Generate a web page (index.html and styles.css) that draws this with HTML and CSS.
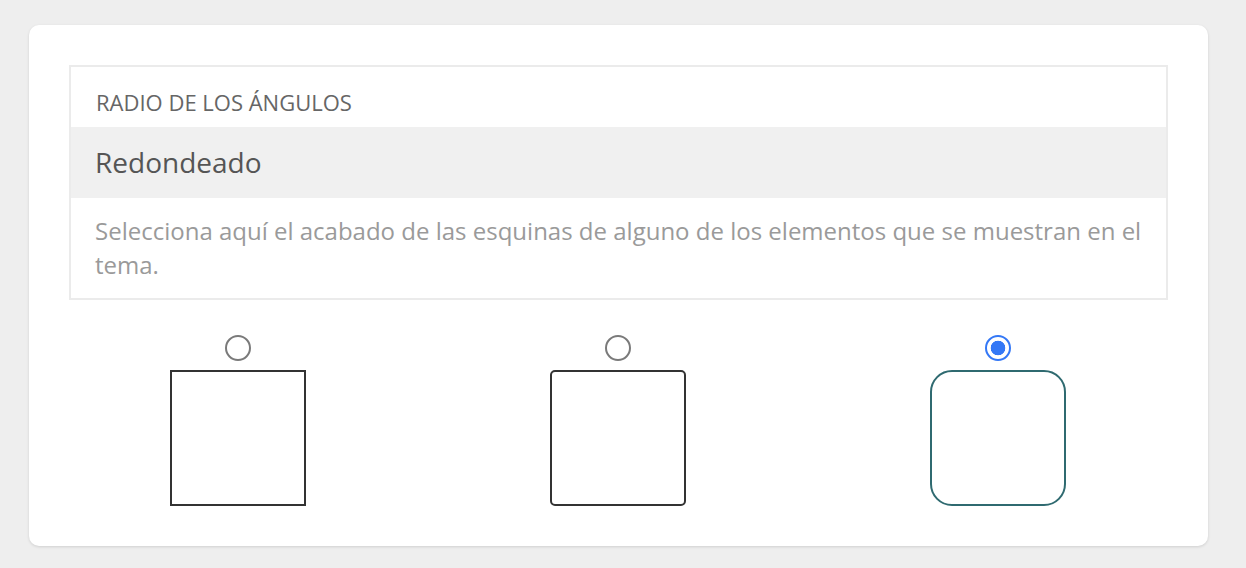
FILE: index.html
```html
<!DOCTYPE html>
<html lang="es">
<head>
<meta charset="utf-8">
<title>Radio de los ángulos</title>
<link rel="stylesheet" href="styles.css">
</head>
<body>
<div class="card">
  <div class="setting">
    <div class="setting-title">Radio de los ángulos</div>
    <div class="setting-value">Redondeado</div>
    <div class="setting-desc">Selecciona aquí el acabado de las esquinas de alguno de los elementos que se muestran en el tema.</div>
  </div>
  <div class="options">
    <label class="option">
      <input type="radio" name="radius" class="radio">
      <span class="swatch swatch-square"></span>
    </label>
    <label class="option">
      <input type="radio" name="radius" class="radio">
      <span class="swatch swatch-soft"></span>
    </label>
    <label class="option">
      <input type="radio" name="radius" class="radio" checked>
      <span class="swatch swatch-round"></span>
    </label>
  </div>
</div>
</body>
</html>
```

FILE: styles.css
```css
html, body {
  margin: 0;
  padding: 0;
}
body {
  background: #eeeeee;
  font-family: "Open Sans", "Liberation Sans", sans-serif;
  padding: 25px 38px 22px 29px;
}
.card {
  background: #ffffff;
  border-radius: 10px;
  box-shadow: 0 1px 3px rgba(0, 0, 0, 0.13);
  padding: 40px 40px 40px 40px;
}
.setting {
  border: 2px solid #ebebeb;
}
.setting-title {
  font-size: 22px;
  line-height: 30px;
  text-transform: uppercase;
  color: #666666;
  padding: 20px 24px 10px 25px;
}
.setting-value {
  background: #f0f0f0;
  font-size: 28px;
  line-height: 38px;
  color: #555555;
  padding: 16px 24px 17px 24px;
}
.setting-desc {
  font-size: 24px;
  line-height: 34px;
  color: #9a9a9a;
  padding: 16px 22px 16px 24px;
}
.options {
  display: flex;
  justify-content: center;
  gap: 244px;
  margin-top: 35px;
  padding-right: 2px;
}
.option {
  display: flex;
  flex-direction: column;
  align-items: center;
  gap: 9px;
  width: 136px;
  cursor: pointer;
}
.radio {
  -webkit-appearance: none;
  appearance: none;
  margin: 0;
  width: 26px;
  height: 26px;
  border: 2px solid #7a7a7a;
  border-radius: 50%;
  background: #fff;
  box-sizing: border-box;
}
.radio:checked {
  border-color: #3478f6;
  background: radial-gradient(circle, #3478f6 0, #3478f6 7px, #ffffff 7.6px);
}
.swatch {
  display: block;
  width: 136px;
  height: 136px;
  box-sizing: border-box;
  border: 2px solid #333333;
}
.swatch-square {
  border-radius: 0;
}
.swatch-soft {
  border-radius: 5px;
}
.swatch-round {
  border-color: #2f6a70;
  border-radius: 22px;
}
```
